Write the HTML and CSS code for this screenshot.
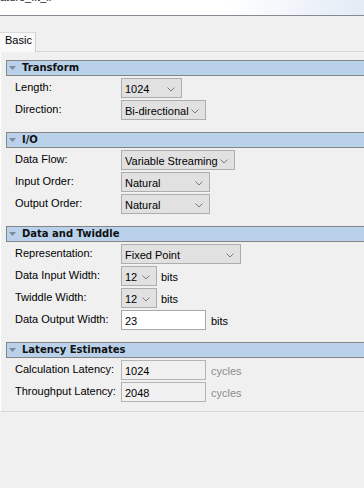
FILE: index.html
```html
<!DOCTYPE html>
<html>
<head>
<meta charset="utf-8">
<link rel="stylesheet" href="styles.css">
</head>
<body>
<div class="titlebar"><span class="title">ature_fft_ii</span></div>
<div class="tabbar"><div class="tab">Basic</div></div>
<div class="panel">
  <section class="sec">
    <div class="sec-head"><svg class="tri" width="7" height="4" viewBox="0 0 7 4"><path d="M0 0H7L3.5 4Z"/></svg>Transform</div>
    <div class="rows">
      <div class="row"><span class="lbl">Length:</span><div class="combo w61"><span class="val">1024</span><svg class="chev" width="8" height="5" viewBox="0 0 8 5"><path d="M0.5 0.5L4 4L7.5 0.5"/></svg></div></div>
      <div class="row"><span class="lbl">Direction:</span><div class="combo w85"><span class="val">Bi-directional</span><svg class="chev" width="8" height="5" viewBox="0 0 8 5"><path d="M0.5 0.5L4 4L7.5 0.5"/></svg></div></div>
    </div>
  </section>
  <section class="sec">
    <div class="sec-head"><svg class="tri" width="7" height="4" viewBox="0 0 7 4"><path d="M0 0H7L3.5 4Z"/></svg>I/O</div>
    <div class="rows">
      <div class="row"><span class="lbl">Data Flow:</span><div class="combo w114"><span class="val">Variable Streaming</span><svg class="chev" width="8" height="5" viewBox="0 0 8 5"><path d="M0.5 0.5L4 4L7.5 0.5"/></svg></div></div>
      <div class="row"><span class="lbl">Input Order:</span><div class="combo w89"><span class="val">Natural</span><svg class="chev" width="8" height="5" viewBox="0 0 8 5"><path d="M0.5 0.5L4 4L7.5 0.5"/></svg></div></div>
      <div class="row"><span class="lbl">Output Order:</span><div class="combo w89"><span class="val">Natural</span><svg class="chev" width="8" height="5" viewBox="0 0 8 5"><path d="M0.5 0.5L4 4L7.5 0.5"/></svg></div></div>
    </div>
  </section>
  <section class="sec">
    <div class="sec-head"><svg class="tri" width="7" height="4" viewBox="0 0 7 4"><path d="M0 0H7L3.5 4Z"/></svg>Data and Twiddle</div>
    <div class="rows">
      <div class="row"><span class="lbl">Representation:</span><div class="combo w120"><span class="val">Fixed Point</span><svg class="chev" width="8" height="5" viewBox="0 0 8 5"><path d="M0.5 0.5L4 4L7.5 0.5"/></svg></div></div>
      <div class="row"><span class="lbl">Data Input Width:</span><div class="combo w36"><span class="val">12</span><svg class="chev" width="8" height="5" viewBox="0 0 8 5"><path d="M0.5 0.5L4 4L7.5 0.5"/></svg></div><span class="unit u4">bits</span></div>
      <div class="row"><span class="lbl">Twiddle Width:</span><div class="combo w36"><span class="val">12</span><svg class="chev" width="8" height="5" viewBox="0 0 8 5"><path d="M0.5 0.5L4 4L7.5 0.5"/></svg></div><span class="unit u4">bits</span></div>
      <div class="row"><span class="lbl">Data Output Width:</span><div class="field edit"><span class="val">23</span></div><span class="unit">bits</span></div>
    </div>
  </section>
  <section class="sec last">
    <div class="sec-head"><svg class="tri" width="7" height="4" viewBox="0 0 7 4"><path d="M0 0H7L3.5 4Z"/></svg>Latency Estimates</div>
    <div class="rows">
      <div class="row"><span class="lbl">Calculation Latency:</span><div class="field ro"><span class="val">1024</span></div><span class="unit dim">cycles</span></div>
      <div class="row"><span class="lbl">Throughput Latency:</span><div class="field ro"><span class="val">2048</span></div><span class="unit dim">cycles</span></div>
    </div>
  </section>
</div>
</body>
</html>
```
FILE: styles.css
```css
html, body {
  margin: 0;
  padding: 0;
  background: #f0f0f0;
  font-family: "Liberation Sans", Arial, sans-serif;
  font-size: 11px;
  color: #000;
  overflow: hidden;
}

.titlebar {
  height: 15px;
  border-bottom: 1px solid #868a92;
  background: linear-gradient(to right, #ffffff 62%, #e3ebf6 100%);
  overflow: hidden;
}

.title {
  display: block;
  margin-top: -9px;
  line-height: 12px;
  color: #1e1e1e;
}

.tabbar {
  height: 35px;
  border-bottom: 1px solid #d9d9d9;
  display: flex;
  align-items: flex-end;
}

.tab {
  box-sizing: border-box;
  height: 20px;
  width: 36px;
  margin-bottom: -1px;
  padding: 0 0 0 5px;
  line-height: 15px;
  background: #f9f9f9;
  border-top: 1px solid #d9d9d9;
  border-right: 1px solid #d0d0d0;
}

.panel {
  border-left: 1px solid #ffffff;
  border-bottom: 1px solid #d8d8d8;
  box-shadow: 0 1px 0 #ffffff;
  padding: 8px 0 9px 5px;
  background: #f0f0f0;
}

.sec-head {
  box-sizing: border-box;
  height: 16px;
  border: 1px solid #858585;
  border-right: none;
  background: #b9d1ea;
  display: flex;
  align-items: center;
  font-family: "DejaVu Sans", Verdana, sans-serif;
  font-weight: bold;
  font-size: 10px;
  line-height: 14px;
  color: #111;
}

.tri {
  margin: 0 6px 0 2px;
  fill: #7d8a99;
}

.rows {
  display: flex;
  flex-direction: column;
  gap: 2px;
  padding: 2px 0 12px 9px;
}

.sec.last .rows {
  padding-bottom: 0;
}

.row {
  display: flex;
  align-items: flex-start;
  height: 20px;
}

.lbl {
  width: 106px;
  flex: none;
  line-height: 18px;
  white-space: nowrap;
}

.combo, .field {
  box-sizing: border-box;
  height: 20px;
  border: 1px solid #adadad;
  display: flex;
  align-items: flex-start;
  flex: none;
}

.combo {
  background: #e1e1e1;
}

.val {
  padding: 3px 0 0 3px;
  line-height: 15px;
  white-space: nowrap;
}

.chev {
  margin: 8px 6px 0 auto;
  fill: none;
  stroke: #7a7a7a;
  stroke-width: 1;
}

.w36 { width: 36px; }
.w61 { width: 61px; }
.w85 { width: 85px; }
.w89 { width: 89px; }
.w114 { width: 114px; }
.w120 { width: 120px; }

.field {
  width: 85px;
}

.field.edit {
  background: #ffffff;
  border-color: #a9a9a9;
}

.field.ro {
  background: #f0f0f0;
  border-color: #b4b4b4;
}

.unit {
  margin-left: 5px;
  padding-top: 4px;
  line-height: 15px;
}

.unit.u4 {
  margin-left: 4px;
}

.unit.dim {
  color: #8d8d8d;
}
```
